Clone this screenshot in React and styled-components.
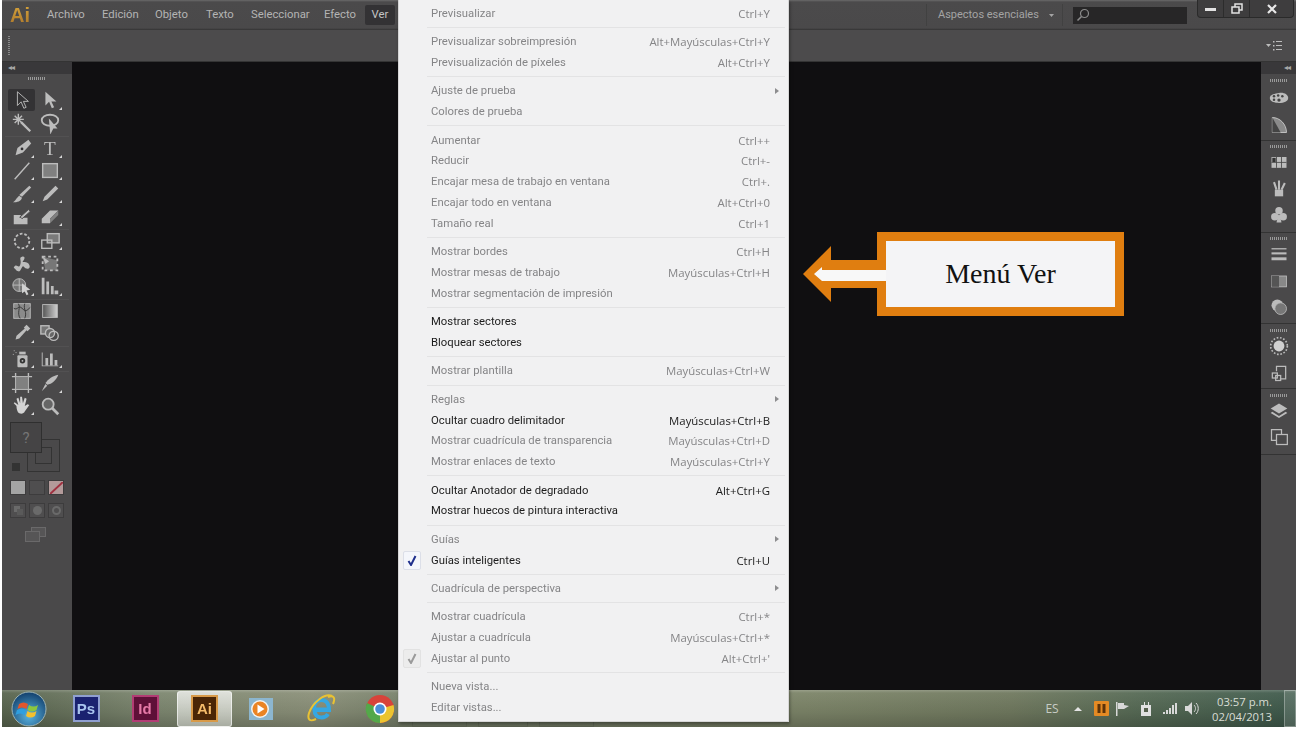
import React from 'react'
import styled, { createGlobalStyle } from 'styled-components'

const GlobalStyle = createGlobalStyle`
  html, body { margin: 0; padding: 0; background: #fff; }
  body { font-family: Roboto, "Open Sans", sans-serif; overflow: hidden; }
  * { box-sizing: border-box; }
`

const Screen = styled.div`
  position: relative;
  width: 1296px;
  height: 729px;
  padding: 0 0 2px 2px;
  display: flex;
  flex-direction: column;
  overflow: hidden;
  filter: blur(.35px);
`

/* ---------- title bar ---------- */
const TitleBar = styled.div`
  height: 30px;
  flex: none;
  display: flex;
  align-items: center;
  background: linear-gradient(#6a6a6a 0, #4b4a4b 2px, #4a494a 28px, #333 30px);
  color: #b4b4b4;
  font-size: 11.3px;
`
const Logo = styled.span`
  width: 45px;
  padding-left: 8px;
  font: bold 20px "Liberation Sans", sans-serif;
  background: linear-gradient(#d9a63c, #a8742a);
  -webkit-background-clip: text;
  background-clip: text;
  color: transparent;
`
const MenuLabel = styled.span`
  width: ${p => p.$w}px;
  line-height: 20px;
  ${p => p.$open && `
    background: #333234;
    border-radius: 2px;
    color: #c4c4c4;
    text-align: center;
  `}
`
const TitleRight = styled.div`
  margin-left: auto;
  display: flex;
  align-items: center;
  height: 100%;
`
const Workspace = styled.span`
  width: 137px;
  margin-right: 10px;
  padding-left: 11px;
  font-size: 11px;
  color: #a4a4a4;
  border-left: 1px solid #414141;
  border-right: 1px solid #414141;
  line-height: 22px;
`
const Search = styled.div`
  width: 114px;
  height: 17px;
  margin-right: 10px;
  padding-left: 3px;
  background: #272627;
  display: flex;
  align-items: center;
`
const WinButtons = styled.div`
  align-self: flex-start;
  display: flex;
  height: 18px;
  width: 97px;
  margin-right: 2px;
  background: #3e3d3e;
  border: 1px solid #2a2a2a;
  border-top: 0;
  border-radius: 0 0 4px 4px;
`
const WinButton = styled.div`
  flex: ${p => p.$grow || 1};
  display: flex;
  align-items: center;
  justify-content: center;
  border-left: ${p => (p.$first ? '0' : '1px solid #2c2c2c')};
`

/* ---------- option bar ---------- */
const OptionBar = styled.div`
  height: 32px;
  flex: none;
  display: flex;
  align-items: center;
  justify-content: space-between;
  padding: 0 14px 0 6px;
  background: #4c4b4c;
  border-bottom: 1px solid #343434;
`
const Grip = styled.div`
  width: 2px;
  height: 20px;
  background: repeating-linear-gradient(#8a8a8a 0 1px, transparent 1px 2px);
`

/* ---------- body ---------- */
const Body = styled.div`
  flex: 1;
  min-height: 0;
  display: flex;
`
const LeftPanel = styled.div`
  width: 70px;
  flex: none;
  background: #4a494a;
  display: flex;
  flex-direction: column;
`
const PanelHead = styled.div`
  height: 12px;
  flex: none;
  padding: 0 6px;
  background: #39383a;
  color: #a8a8a8;
  font: 8px/12px "DejaVu Sans", sans-serif;
  letter-spacing: -1px;
  text-align: ${p => p.$right ? 'right' : 'left'};
`
const HGrip = styled.div`
  width: ${p => p.$w || 18}px;
  height: 3px;
  flex: none;
  margin: ${p => p.$m || '3px auto 8px'};
  background: repeating-linear-gradient(90deg, #9a9a9a 0 1px, transparent 1px 2px);
`
const ToolGroup = styled.div`
  display: grid;
  grid-template-columns: 28px 28px;
  grid-auto-rows: ${p => p.$row || 22.7}px;
  margin: 0 3px;
  padding: 0 3px 1px;
  border-bottom: 1px solid ${p => (p.$last ? 'transparent' : '#525152')};
`
const Tool = styled.div`
  position: relative;
  display: flex;
  align-items: center;
  justify-content: center;
  border-radius: 2px;
  margin: ${p => (p.$active ? '1px 1px 1px 0' : '0')};
  background: ${p => (p.$active ? '#333234' : 'transparent')};
  ${p => p.$corner && `
    &::after {
      content: "";
      position: absolute;
      right: 2px;
      bottom: 2px;
      border-style: solid;
      border-width: 0 0 3px 3px;
      border-color: transparent transparent #d8d8d8 transparent;
    }
  `}
`
const ColorWell = styled.div`
  position: relative;
  height: 50px;
  margin: 3px 0 0 8px;
  flex: none;
`
const FillBox = styled.div`
  position: absolute;
  left: 0;
  top: 0;
  width: 32px;
  height: 31px;
  background: #454445;
  border: 1px solid #2f2f2f;
  color: #757575;
  font-size: 15px;
  display: flex;
  align-items: center;
  justify-content: center;
`
const StrokeBox = styled.div`
  position: absolute;
  left: 17px;
  top: 17px;
  width: 33px;
  height: 33px;
  border: 1px solid #333;
  &::after {
    content: "";
    position: absolute;
    inset: 7px;
    border: 1px solid #333;
  }
`
const MiniSwatch = styled.div`
  position: absolute;
  left: 2px;
  bottom: 1px;
  width: 8px;
  height: 8px;
  background: #333;
`
const ModeRow = styled.div`
  display: flex;
  gap: 3px;
  margin: ${p => p.$m};
  padding-left: 8px;
  flex: none;
`
const ModeButton = styled.div`
  width: 16px;
  height: 15px;
  border: 1px solid #3d3c3d;
  background: ${p => p.$bg || '#4f4e4f'};
  display: flex;
  align-items: center;
  justify-content: center;
`
const ScreenMode = styled.div`
  margin: 9px auto 0 23px;
  flex: none;
`
const Canvas = styled.div`
  flex: 1;
  background: #100f11;
`
const RightPanel = styled.div`
  width: 37px;
  flex: none;
  padding-left: 2px;
  background: #100f11;
  display: flex;
  flex-direction: column;
`
const RightInner = styled.div`
  flex: 1;
  background: #4a494a;
  display: flex;
  flex-direction: column;
`
const Dock = styled.div`
  padding-bottom: ${p => p.$pb || 0}px;
  border-bottom: 1px solid #333;
  display: flex;
  flex-direction: column;
  align-items: center;
`
const DockIcon = styled.div`
  height: 26.4px;
  display: flex;
  align-items: center;
  justify-content: center;
`

/* ---------- taskbar ---------- */
const Taskbar = styled.div`
  height: 37px;
  flex: none;
  display: flex;
  align-items: center;
  color: #d9ddd5;
  background:
    linear-gradient(rgba(255,255,255,.22) 0, rgba(255,255,255,.05) 3px, rgba(0,0,0,.06) 60%, rgba(0,0,0,.2) 100%),
    linear-gradient(90deg, #59654f 0, #7d8770 12%, #8b9079 24%, #76806a 32%, #7c8468 62%, #70795f 78%, #566a55 88%, #3f5a4c 100%);
`
const Orb = styled.div`
  width: 53px;
  flex: none;
  display: flex;
  justify-content: center;
`
const TaskItem = styled.div`
  width: ${p => p.$w}px;
  height: 36px;
  flex: none;
  display: flex;
  align-items: center;
  justify-content: center;
  ${p => p.$active && `
    margin: 0 3px 0 4px;
    background: linear-gradient(rgba(255,255,255,.72), rgba(255,255,255,.42));
    border: 1px solid rgba(255,255,255,.6);
    border-radius: 3px;
  `}
`
const AppTile = styled.div`
  width: 27px;
  height: 27px;
  display: flex;
  align-items: center;
  justify-content: center;
  font: bold 15px "Liberation Sans", sans-serif;
  background: ${p => p.$bg};
  color: ${p => p.$fg};
  border: 2px solid ${p => p.$line};
`
const Tray = styled.div`
  margin-left: auto;
  display: flex;
  align-items: center;
  height: 100%;
`
const TraySlot = styled.div`
  width: ${p => p.$w}px;
  display: flex;
  justify-content: center;
  font: 12px "Open Sans", sans-serif;
  color: #c8ccc4;
`
const Clock = styled.div`
  width: 62px;
  margin-left: 8px;
  font: 11.3px/15px "Open Sans", sans-serif;
  text-align: right;
`
const ShowDesktop = styled.div`
  width: 12px;
  height: 100%;
  margin-left: 12px;
  border: 1px solid rgba(255,255,255,.3);
  background: rgba(255,255,255,.12);
`

/* ---------- open menu, lies over the window ---------- */
const Menu = styled.div`
  position: absolute;
  left: 398px;
  top: 0;
  width: 391px;
  height: 722px;
  padding-top: 3px;
  background: #f1f1f2;
  border: 1px solid #d6d6d6;
  border-top: 0;
  box-shadow: 1px 2px 3px rgba(0,0,0,.35);
`
const MenuRow = styled.div`
  position: relative;
  height: 20.8px;
  display: flex;
  align-items: center;
  justify-content: space-between;
  padding: 0 18px 0 32px;
  font-size: 11.3px;
  color: ${p => (p.$on ? '#1c1c1c' : '#858587')};
`
const Shortcut = styled.span`
  font: 11.4px "Open Sans", sans-serif;
`
const Separator = styled.div`
  height: 7.6px;
  margin-left: 28px;
  margin-right: 3px;
  display: flex;
  align-items: center;
  &::after {
    content: "";
    flex: 1;
    height: 1px;
    background: #e3e3e4;
  }
`
const SubArrow = styled.span`
  position: absolute;
  right: 9px;
  top: 7px;
  border-style: solid;
  border-width: 3.5px 0 3.5px 4px;
  border-color: transparent transparent transparent #8d8d8f;
`
const Check = styled.span`
  position: absolute;
  left: 4px;
  top: 1px;
  width: 18px;
  height: 19px;
  display: flex;
  align-items: center;
  justify-content: center;
  border-radius: 2px;
  background: ${p => (p.$on ? '#f4f6fb' : '#ececec')};
  border: 1px solid ${p => (p.$on ? '#dcdfe8' : '#e2e2e2')};
`
/* thumbnails of taskbar buttons that show below the menu edge */
const MenuPeek = styled.div`
  position: absolute;
  left: 412px;
  top: 722px;
  display: flex;
  gap: 11px;
`
const PeekBox = styled.div`
  width: ${p => p.$w}px;
  height: 5px;
  border: 1px solid #59604f;
  border-top: 0;
`

/* ---------- callout ---------- */
const Callout = styled.div`
  position: absolute;
  left: 803px;
  top: 232px;
  display: flex;
  align-items: center;
`
const CalloutArrow = styled.svg`
  position: relative;
  z-index: 1;
  flex: none;
  margin-right: -9px;
`
const CalloutBox = styled.div`
  width: 247px;
  height: 84px;
  display: flex;
  align-items: center;
  justify-content: center;
  background: #f4f4f6;
  border: 9px solid #e07e10;
  color: #111;
  font: 28px "Liberation Serif", serif;
`

const L = '#bcbcbc'
const D = '#333234'

const toolIcons = [
  [
    { d: <path d="M7 3v15l4-4 3 7 2.500-1-3-6.500H19z" fill={D} stroke={L} /> },
    { corner: true, d: <path d="M7 3v15l4-4 3 7 2.500-1-3-6.500H19z" fill={L} /> },
    { d: <g stroke={L}><path d="M11 11l10 10" strokeWidth="2.500" /><path d="M8 2v12M2 8h12M4 4l8 8M12 4l-8 8" strokeWidth="1.500" /></g> },
    { d: <g fill="none" stroke={L} strokeWidth="2"><ellipse cx="12" cy="9" rx="9" ry="6" /><path d="M12 10l6 7-3 0-2 4z" fill={L} /></g> },
  ],
  [
    { corner: true, d: <g><path d="M19 3l3 4-9 10-8 3 2-8z" fill={L} /><circle cx="12" cy="13" r="1.500" fill={D} /></g> },
    { corner: true, d: <text x="12" y="20" textAnchor="middle" fontSize="21" fontFamily="Liberation Serif" fill={L}>T</text> },
    { corner: true, d: <path d="M4 21L20 3" stroke={L} strokeWidth="1.500" /> },
    { corner: true, d: <rect x="4" y="4" width="16" height="15" fill="#808080" stroke={L} strokeWidth="1.500" /> },
    { corner: true, d: <g fill={L}><path d="M20 3l2 2-10 10-3-2z" /><path d="M9 14l3 2c-1 4-5 5-10 5 3-1 4-5 7-7z" /></g> },
    { corner: true, d: <g fill={L}><path d="M18 3l3 3L9 18l-5 2 2-5z" /></g> },
    { d: <g fill={L}><path d="M3 11h8l-2 3h9v7H3z" /><path d="M10 13l9-8 2 2-9 8z" stroke="#4a494a" /></g> },
    { corner: true, d: <g><path d="M3 15l9-9h9l-9 9v5H3z" fill={L} /><path d="M12 15v5l9-9V6z" fill="#808080" /></g> },
  ],
  [
    { corner: true, d: <circle cx="12" cy="12" r="8" fill="none" stroke={L} strokeWidth="2" strokeDasharray="3 2" /> },
    { corner: true, d: <g fill="none" stroke={L} strokeWidth="1.500"><rect x="9" y="4" width="13" height="10" fill="#7a7a7a" /><rect x="3" y="11" width="11" height="9" /></g> },
    { corner: true, d: <path d="M3 16c3-6 5 2 7-3s-2-8 2-9 3 3 1 5 5-1 7 4-4 5-6 2-3 6-6 5-2-2-5-4z" fill={L} /> },
    { d: <g><path d="M4 4l16 4v11H7z" fill="#777" /><path d="M4 4h16v15H4z" fill="none" stroke={L} strokeWidth="2" strokeDasharray="3 3" /><path d="M4 4l7 5-4 3z" fill={L} /></g> },
    { corner: true, d: <g><circle cx="9" cy="11" r="7" fill="#777" stroke={L} /><path d="M2 11h14M9 4v14" stroke={L} /><path d="M12 9l9 7-4 1 2 4-2 1-2-4-3 2z" fill="#d0d0d0" /></g> },
    { corner: true, d: <g fill={L}><path d="M3 3h3v18H3zM8 7h3v14H8zM13 12h3v9h-3zM17 17h4v4h-4z" /></g> },
  ],
  [
    { d: <g><rect x="3" y="4" width="18" height="16" fill="#8a8a8a" stroke={L} /><path d="M3 9c4 3 5-4 9 0s5 3 9-1M8 4c3 4-2 10 2 16M15 4c-2 6 3 9 0 16" fill="none" stroke="#333" /></g> },
    { grad: true },
    { corner: true, d: <g fill={L}><path d="M17 2l4 4-3 3-1-1-8 9-4 1 1-4 9-8-1-1z" /></g> },
    { d: <g fill="none" stroke={L} strokeWidth="1.500"><rect x="2" y="3" width="9" height="9" fill="#777" /><circle cx="12" cy="11" r="5" fill="#666" /><circle cx="16" cy="14" r="5" /></g> },
  ],
  [
    { corner: true, d: <g><rect x="7" y="8" width="11" height="13" rx="1" fill={L} /><circle cx="12.500" cy="14" r="3" fill="#333" /><circle cx="12.500" cy="14" r="1" fill={L} /><path d="M9 4h7v3H9z" fill={L} /><path d="M3 3h1M2 7h1M5 5h1" stroke={L} /></g> },
    { corner: true, d: <g fill={L}><path d="M3 20V5h1v14h17v1z" /><path d="M7 11h3v8H7zM12 6h3v13h-3zM17 13h3v6h-3z" /></g> },
  ],
  [
    { d: <g><rect x="5" y="5" width="14" height="14" fill="#808080" stroke={L} /><path d="M1 5h4M19 5h4M1 19h4M19 19h4M5 1v4M5 19v4M19 1v4M19 19v4" stroke={L} strokeWidth="1.500" /></g> },
    { corner: true, d: <g fill={L}><path d="M21 3c-2 6-7 10-12 11l-2-2C10 8 15 4 21 3z" /><path d="M7 13l2 2-6 6z" /></g> },
    { corner: true, d: <path d="M6 12l-3-3 1-1 4 3-2-7 2-1 2 6V2h2l1 7 2-6 2 1-2 8 3-2 2 1-5 7c-1 2-3 3-6 2-2-1-3-5-3-8z" fill="#d4d4d4" /> },
    { d: <g fill="none" stroke={L}><circle cx="10" cy="10" r="6" strokeWidth="2" fill="#666" /><path d="M14 14l7 7" strokeWidth="3" /></g> },
  ],
]

const IconSvg = ({ children, size = 22 }) => (
  <svg width={size} height={size} viewBox="0 0 24 24">{children}</svg>
)

const GradientRect = () => (
  <IconSvg>
    <defs>
      <linearGradient id="toolGrad" x1="0" x2="1">
        <stop offset="0" stopColor="#555" />
        <stop offset="1" stopColor="#d0d0d0" />
      </linearGradient>
    </defs>
    <rect x="4" y="5" width="16" height="14" fill="url(#toolGrad)" stroke={L} />
  </IconSvg>
)

const dockGroups = [
  {
    pb: 2,
    grip: '5px auto 3px',
    icons: [
      <g key="palette"><path d="M12 6c6-1 11 2 11 6s-5 6-11 6S1 16 1 12s5-5 11-6z" fill={L} /><g fill="#444"><circle cx="6" cy="10" r="1.500" /><circle cx="11" cy="9" r="1.500" /><circle cx="16" cy="10" r="1.500" /><circle cx="6" cy="14" r="1.500" /><circle cx="12" cy="14.500" r="2" /></g></g>,
      <g key="guide"><path d="M4 3c9 0 17 8 17 18H4z" fill="#8a8a8a" stroke="#d0d0d0" /><path d="M4 3l10 18H4z" fill="#444" /></g>,
    ],
  },
  {
    pb: 4,
    grip: '4px auto 1px',
    icons: [
      <g key="swatches"><rect x="3" y="6" width="18" height="13" fill={L} /><path d="M3 12.500h18M9 6v13M15 6v13" stroke="#444" /><rect x="4" y="7" width="4" height="5" fill="#333" /></g>,
      <g key="brushes"><path d="M7 14h10v8H7z" fill={L} /><path d="M9 14L6 5M12 14V3M15 14l4-8" stroke={L} strokeWidth="2.500" /></g>,
      <g key="club" fill={L}><circle cx="12" cy="7" r="4.500" /><circle cx="7" cy="14" r="4.500" /><circle cx="17" cy="14" r="4.500" /><path d="M11 12h2l2 9H9z" /></g>,
    ],
  },
  {
    pb: 3,
    grip: '4px auto 1px',
    icons: [
      <g key="stroke" fill={L}><rect x="3" y="5" width="18" height="1.500" /><rect x="3" y="10" width="18" height="2.500" /><rect x="3" y="16" width="18" height="3.500" /></g>,
      <g key="gradient"><rect x="3" y="6" width="18" height="13" fill="#888" stroke={L} /><rect x="3" y="6" width="9" height="13" fill="#555" /></g>,
      <g key="transparency"><circle cx="10" cy="10" r="7" fill={L} /><circle cx="14" cy="14" r="7" fill="#777" stroke={L} /></g>,
    ],
  },
  {
    pb: 2,
    grip: '5px auto 1px',
    icons: [
      <g key="appearance"><circle cx="12" cy="12" r="6.500" fill="#d0d0d0" /><circle cx="12" cy="12" r="10" fill="none" stroke={L} strokeWidth="2" strokeDasharray="2 2" /></g>,
      <g key="transform" fill="none" stroke={L} strokeWidth="1.500"><path d="M9 10V4h11v15h-7" /><rect x="4" y="12" width="6" height="6" /><rect x="8" y="15" width="6" height="6" /></g>,
    ],
  },
  {
    pb: 3,
    grip: '5px auto 1px',
    icons: [
      <g key="layers" fill={L}><path d="M12 3l10 6-10 6L2 9z" /><path d="M4 13l8 5 8-5 2 1.500-10 6-10-6z" /></g>,
      <g key="artboards" fill="none" stroke={L} strokeWidth="1.500"><path d="M15 9V3H3v13h6" /><rect x="9" y="9" width="13" height="12" /></g>,
    ],
  },
]

const menuSections = [
  [{ t: 'Previsualizar', k: 'Ctrl+Y' }],
  [{ t: 'Previsualizar sobreimpresión', k: 'Alt+Mayúsculas+Ctrl+Y' }, { t: 'Previsualización de píxeles', k: 'Alt+Ctrl+Y' }],
  [{ t: 'Ajuste de prueba', sub: true }, { t: 'Colores de prueba' }],
  [{ t: 'Aumentar', k: 'Ctrl++' }, { t: 'Reducir', k: 'Ctrl+-' }, { t: 'Encajar mesa de trabajo en ventana', k: 'Ctrl+.' }, { t: 'Encajar todo en ventana', k: 'Alt+Ctrl+0' }, { t: 'Tamaño real', k: 'Ctrl+1' }],
  [{ t: 'Mostrar bordes', k: 'Ctrl+H' }, { t: 'Mostrar mesas de trabajo', k: 'Mayúsculas+Ctrl+H' }, { t: 'Mostrar segmentación de impresión' }],
  [{ t: 'Mostrar sectores', on: true }, { t: 'Bloquear sectores', on: true }],
  [{ t: 'Mostrar plantilla', k: 'Mayúsculas+Ctrl+W' }],
  [{ t: 'Reglas', sub: true }, { t: 'Ocultar cuadro delimitador', k: 'Mayúsculas+Ctrl+B', on: true }, { t: 'Mostrar cuadrícula de transparencia', k: 'Mayúsculas+Ctrl+D' }, { t: 'Mostrar enlaces de texto', k: 'Mayúsculas+Ctrl+Y' }],
  [{ t: 'Ocultar Anotador de degradado', k: 'Alt+Ctrl+G', on: true }, { t: 'Mostrar huecos de pintura interactiva', on: true }],
  [{ t: 'Guías', sub: true }, { t: 'Guías inteligentes', k: 'Ctrl+U', on: true, check: true }],
  [{ t: 'Cuadrícula de perspectiva', sub: true }],
  [{ t: 'Mostrar cuadrícula', k: 'Ctrl+*' }, { t: 'Ajustar a cuadrícula', k: 'Mayúsculas+Ctrl+*' }, { t: 'Ajustar al punto', k: "Alt+Ctrl+'", check: true }],
  [{ t: 'Nueva vista...' }, { t: 'Editar vistas...' }],
]

const topMenus = [
  ['Archivo', 55], ['Edición', 53], ['Objeto', 51], ['Texto', 45], ['Seleccionar', 73], ['Efecto', 41],
]

const App = () => {
  return (
    <Screen>
      <GlobalStyle />
      <TitleBar>
        <Logo>Ai</Logo>
        {topMenus.map(([name, w]) => <MenuLabel key={name} $w={w}>{name}</MenuLabel>)}
        <MenuLabel $w={30} $open>Ver</MenuLabel>
        <TitleRight>
          <Workspace>
            Aspectos esenciales
            <svg width="5" height="3" viewBox="0 0 5 3" style={{ marginLeft: 10, marginBottom: 1 }}><path d="M0 0h5L2.500 3z" fill="#a4a4a4" /></svg>
          </Workspace>
          <Search>
            <svg width="14" height="14" viewBox="0 0 14 14" fill="none" stroke="#8c8c8c" strokeWidth="1.200">
              <circle cx="8.500" cy="5.500" r="4" /><path d="M5.500 8.500L1.500 12.500" strokeWidth="1.600" />
            </svg>
          </Search>
          <WinButtons>
            <WinButton $first $grow={1}>
              <svg width="11" height="4"><rect width="11" height="3" y="1" fill="#e2e2e2" /></svg>
            </WinButton>
            <WinButton $grow={1}>
              <svg width="12" height="11" fill="none" stroke="#e2e2e2" strokeWidth="1.500"><rect x="4" y="1" width="7" height="6" /><rect x="1" y="4" width="7" height="6" fill="#3e3d3e" /></svg>
            </WinButton>
            <WinButton $grow={1.7}>
              <svg width="10" height="10" stroke="#e8e8e8" strokeWidth="2.200"><path d="M1 1l8 8M9 1l-8 8" /></svg>
            </WinButton>
          </WinButtons>
        </TitleRight>
      </TitleBar>

      <OptionBar>
        <Grip />
        <svg width="16" height="12" viewBox="0 0 16 12" fill="#bcbcbc">
          <path d="M0 4h5L2.500 7z" /><rect x="7" y="1" width="1.500" height="1.500" /><rect x="10" y="1" width="6" height="1" /><rect x="7" y="5" width="1.500" height="1.500" /><rect x="10" y="5" width="6" height="1" /><rect x="7" y="9" width="1.500" height="1.500" /><rect x="10" y="9" width="6" height="1" />
        </svg>
      </OptionBar>

      <Body>
        <LeftPanel>
          <PanelHead>◂◂</PanelHead>
          <HGrip />
          {toolIcons.map((group, i) => (
            <ToolGroup key={i} $last={i === toolIcons.length - 1} $row={i === 0 ? 23.5 : undefined}>
              {group.map((tool, j) => (
                <Tool key={j} $corner={tool.corner} $active={i === 0 && j === 0}>
                  {tool.grad ? <GradientRect /> : <IconSvg>{tool.d}</IconSvg>}
                </Tool>
              ))}
            </ToolGroup>
          ))}
          <ColorWell>
            <StrokeBox />
            <MiniSwatch />
            <FillBox>?</FillBox>
          </ColorWell>
          <ModeRow $m="8px 0 0 0">
            <ModeButton $bg="#a4a4a4" />
            <ModeButton />
            <ModeButton $bg="#b39a9a">
              <svg width="13" height="12"><path d="M0 12L13 0" stroke="#a03040" strokeWidth="2" /></svg>
            </ModeButton>
          </ModeRow>
          <ModeRow $m="8px 0 0 0">
            <ModeButton><svg width="11" height="11"><rect x="1" y="1" width="6" height="6" fill="#6a6a6a" /><rect x="4" y="4" width="6" height="6" fill="#5a5a5a" /></svg></ModeButton>
            <ModeButton><svg width="11" height="11"><circle cx="5.500" cy="5.500" r="4.500" fill="#6a6a6a" /></svg></ModeButton>
            <ModeButton><svg width="11" height="11"><circle cx="5.500" cy="5.500" r="3.500" fill="none" stroke="#6a6a6a" strokeWidth="2" /></svg></ModeButton>
          </ModeRow>
          <ScreenMode>
            <svg width="21" height="15" fill="#565556" stroke="#6a696a"><rect x="6.500" y=".5" width="14" height="9" /><rect x=".5" y="4.500" width="14" height="10" /></svg>
          </ScreenMode>
        </LeftPanel>

        <Canvas />

        <RightPanel>
          <RightInner>
            <PanelHead $right>◂◂</PanelHead>
            {dockGroups.map((group, i) => (
              <Dock key={i} $pb={group.pb}>
                <HGrip $w={18} $m={group.grip} />
                {group.icons.map((icon, j) => (
                  <DockIcon key={j}><IconSvg size={20}>{icon}</IconSvg></DockIcon>
                ))}
              </Dock>
            ))}
          </RightInner>
        </RightPanel>
      </Body>

      <Taskbar>
        <Orb>
          <svg width="36" height="36" viewBox="0 0 36 36">
            <defs>
              <radialGradient id="orbGrad" cx=".5" cy=".7" r=".7">
                <stop offset="0" stopColor="#5ab4e0" />
                <stop offset="1" stopColor="#123f6c" />
              </radialGradient>
            </defs>
            <circle cx="18" cy="18" r="17" fill="url(#orbGrad)" stroke="#9fb4b4" />
            <path d="M8 13c3-2 6-2 9 0l-1.500 5c-3-2-6-2-9 0z" fill="#e2562c" />
            <path d="M18 14c3 2 6 2 9 0l-1.500 5c-3 2-6 2-9 0z" fill="#8cc63f" />
            <path d="M6 19c3-2 6-2 9 0l-1.500 5c-3-2-6-2-9 0z" fill="#2f9fe0" />
            <path d="M16.500 20c3 2 6 2 9 0L24 25c-3 2-6 2-9 0z" fill="#f5c02e" />
          </svg>
        </Orb>
        <TaskItem $w={62}><AppTile $bg="#1a2270" $fg="#a9c4ee" $line="#8f9fd0">Ps</AppTile></TaskItem>
        <TaskItem $w={56}><AppTile $bg="#5e1038" $fg="#e67aa8" $line="#b23c74">Id</AppTile></TaskItem>
        <TaskItem $w={55} $active><AppTile $bg="#4a2606" $fg="#f4bc6a" $line="#d89a48">Ai</AppTile></TaskItem>
        <TaskItem $w={52}>
          <svg width="26" height="26" viewBox="0 0 26 26">
            <rect x="1" y="2" width="24" height="22" fill="#8cb6cf" />
            <circle cx="12" cy="13" r="9" fill="#f2f2f0" />
            <circle cx="12" cy="13" r="7.500" fill="#ea8424" />
            <path d="M9.500 8.500l7 4.500-7 4.500z" fill="#fff" />
          </svg>
        </TaskItem>
        <TaskItem $w={68}>
          <svg width="32" height="32" viewBox="0 0 32 32" fill="none">
            <path d="M24 16.500H9.500M9 16c0-6 3.500-9 7.500-9s7.500 3 7.500 10H9.500c0 5 3 7.500 7 7.500 3 0 5-1 6.500-3.500" stroke="#35a7e2" strokeWidth="4" />
            <path d="M27 3c-7-3-19 6-23 17-2 7 1 9 7 6M23 4c5-2 8 0 5 7" stroke="#e9c233" strokeWidth="2" />
          </svg>
        </TaskItem>
        <TaskItem $w={50}>
          <svg width="30" height="30" viewBox="0 0 30 30">
            <circle cx="15" cy="15" r="14" fill="#d8433a" />
            <path d="M15 15L28.500 11A14 14 0 0 1 15 29z" fill="#ecc430" />
            <path d="M15 15L15 29A14 14 0 0 1 2 9z" fill="#53a84a" />
            <circle cx="15" cy="15" r="6.500" fill="#fff" />
            <circle cx="15" cy="15" r="4.800" fill="#4a8fd8" />
          </svg>
        </TaskItem>
        <Tray>
          <TraySlot $w={24}>ES</TraySlot>
          <TraySlot $w={28}><svg width="8" height="4"><path d="M0 4h8L4 0z" fill="#e4e4e4" /></svg></TraySlot>
          <TraySlot $w={18}>
            <svg width="15" height="15"><rect width="15" height="15" rx="1" fill="#e48a24" /><rect x="3.500" y="3" width="3" height="9" fill="#5c3208" /><rect x="8.500" y="3" width="3" height="9" fill="#5c3208" /></svg>
          </TraySlot>
          <TraySlot $w={24}>
            <svg width="15" height="14" fill="#d8d8d8"><rect x="1" width="1.500" height="14" /><path d="M3 1h6v2l5 1-5 3H3z" /></svg>
          </TraySlot>
          <TraySlot $w={24}>
            <svg width="14" height="14" fill="#e0e0e0"><path d="M2 3h10v11H2z" /><path d="M5 0h1v5H5zM9 0h1v5H9z" /><rect x="5" y="6" width="4" height="4" fill="#55604c" /></svg>
          </TraySlot>
          <TraySlot $w={24}>
            <svg width="15" height="11" fill="#d8d8d8"><rect x="0" y="9" width="2" height="2" /><rect x="3" y="7" width="2" height="4" /><rect x="6" y="5" width="2" height="6" /><rect x="9" y="2" width="2" height="9" /><rect x="12" width="2" height="11" /></svg>
          </TraySlot>
          <TraySlot $w={20}>
            <svg width="15" height="13" fill="#d8d8d8"><path d="M0 4h3l4-4v13L3 9H0z" /><path d="M9 3c2 2 2 5 0 7M11 1c3 3 3 8 0 11" fill="none" stroke="#d8d8d8" /></svg>
          </TraySlot>
          <Clock>03:57 p.m.<br />02/04/2013</Clock>
          <ShowDesktop />
        </Tray>
      </Taskbar>

      <MenuPeek>
        <PeekBox $w={55} />
        <PeekBox $w={50} />
        <PeekBox $w={55} />
      </MenuPeek>

      <Menu>
        {menuSections.map((section, i) => (
          <React.Fragment key={i}>
            {i > 0 && <Separator />}
            {section.map(item => (
              <MenuRow key={item.t} $on={item.on}>
                {item.check && (
                  <Check $on={item.on}>
                    <svg width="10" height="11" fill="none" stroke={item.on ? '#1f2f8c' : '#9a9a9a'} strokeWidth="2"><path d="M1.500 6l2.500 4 4.500-9" /></svg>
                  </Check>
                )}
                <span>{item.t}</span>
                {item.k && <Shortcut>{item.k}</Shortcut>}
                {item.sub && <SubArrow />}
              </MenuRow>
            ))}
          </React.Fragment>
        ))}
      </Menu>

      <Callout>
        <CalloutArrow width="83" height="56" viewBox="0 0 83 56">
          <path d="M0 28L28 0v14h47v28H28v14z" fill="#e07e10" />
          <path d="M11 28l8-7v3h64v11H19v-0z" fill="#f8f8f8" />
        </CalloutArrow>
        <CalloutBox>Menú Ver</CalloutBox>
      </Callout>
    </Screen>
  )
}

export default App
